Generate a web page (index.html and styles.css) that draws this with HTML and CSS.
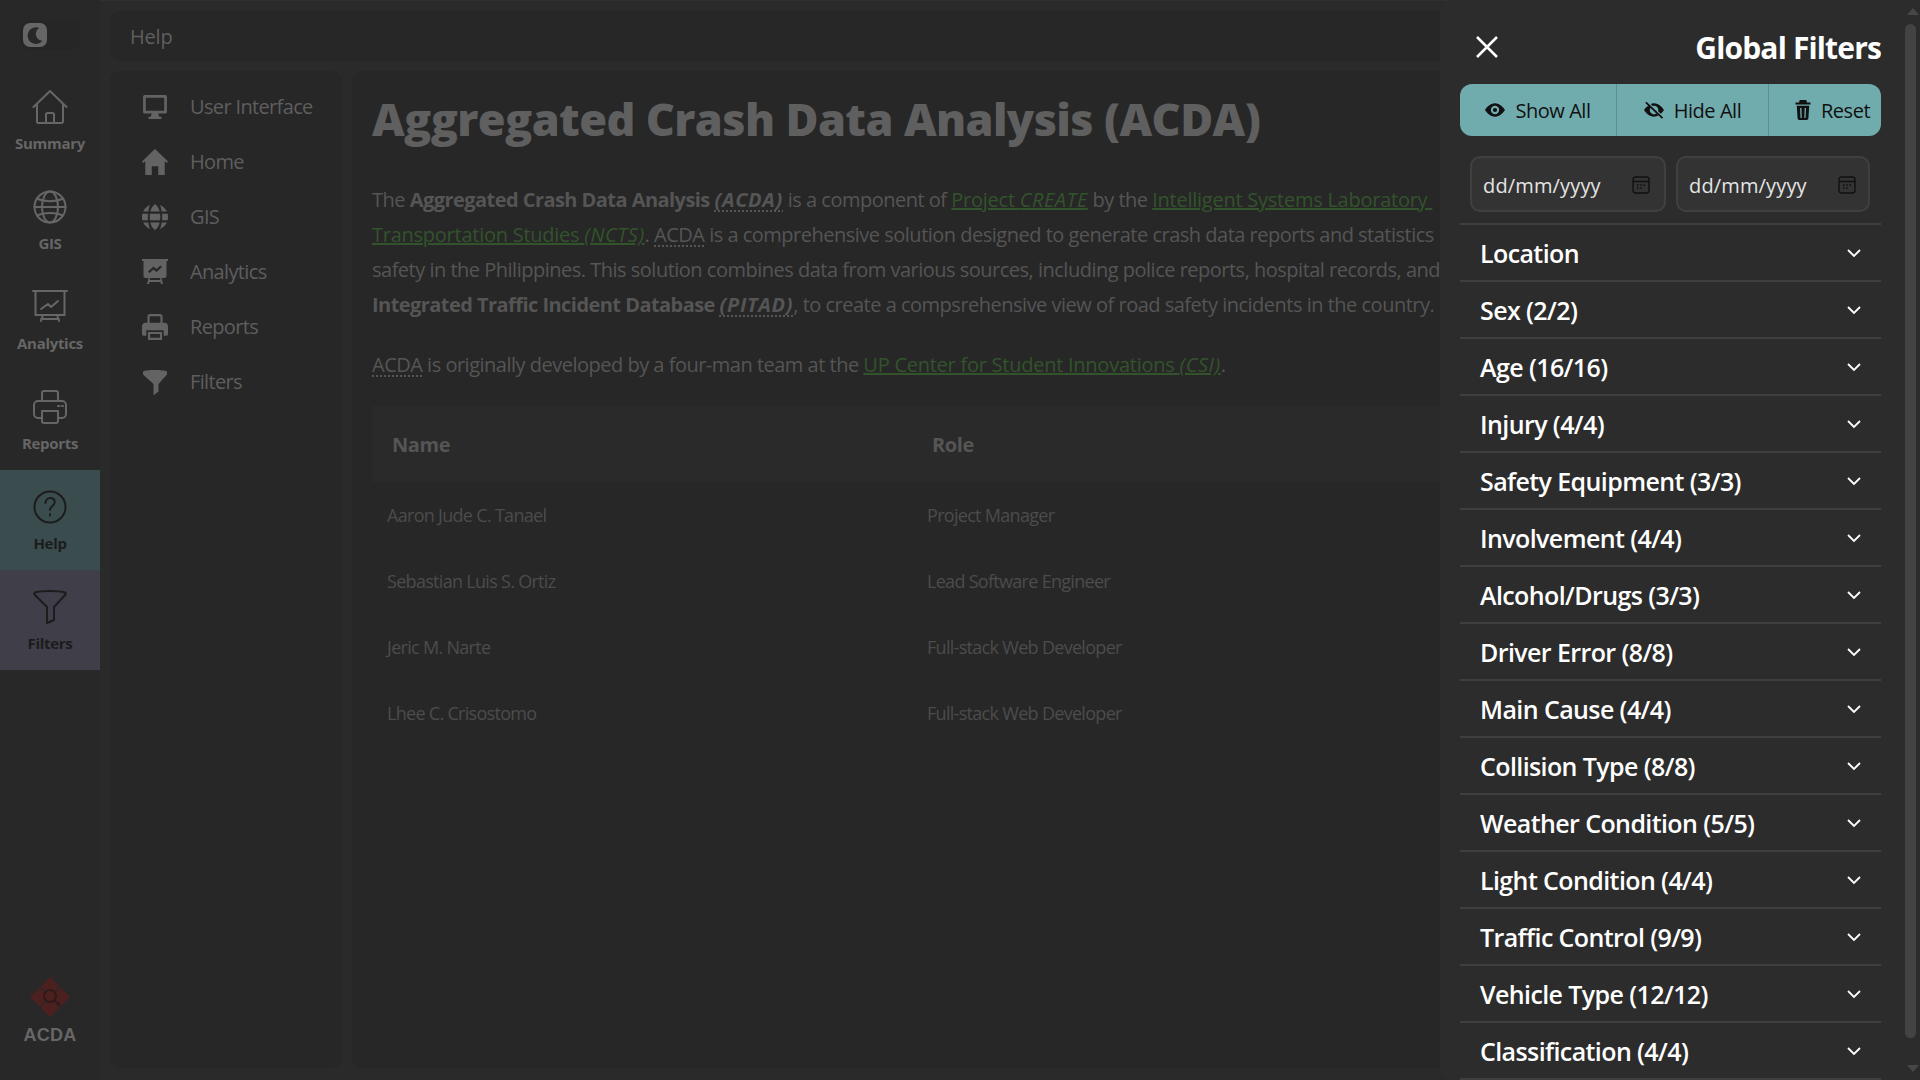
FILE: index.html
```html
<!DOCTYPE html>
<html lang="en">
<head>
<meta charset="utf-8">
<title>Help</title>
<link rel="stylesheet" href="styles.css">
</head>
<body>
<div class="app">
  <nav class="rail">
    <div class="toggle-wrap"><div class="toggle"><div class="knob">
      <svg viewBox="0 0 24 24" class="moon"><path d="M17 3.500a10 10 0 1 0 4 15.500 9 9 0 0 1-8-7.500 9 9 0 0 1 4-8z"/></svg>
    </div></div></div>
    <a class="rail-item"><svg viewBox="0 0 36 36" class="ri"><path d="M1.500 18 18 2l16.500 16M5 15v17.500a1.500 1.500 0 0 0 1.500 1.500h23a1.500 1.500 0 0 0 1.500-1.500V15M14 34v-8.500a1.500 1.500 0 0 1 1.500-1.500h5a1.500 1.500 0 0 1 1.500 1.500V34"/></svg><span>Summary</span></a>
    <a class="rail-item"><svg viewBox="0 0 36 36" class="ri"><circle cx="18" cy="18" r="15.500"/><ellipse cx="18" cy="18" rx="8" ry="15.500"/><path d="M5 9.500c7 3.500 19 3.500 26 0M5 26.500c7-3.500 19-3.500 26 0M2.500 18h31"/></svg><span>GIS</span></a>
    <a class="rail-item"><svg viewBox="0 0 36 36" class="ri"><path d="M1 2h34M3.500 2v24h29V2M9 32l2-6M27 32l-2-6M9 30h18M9 20l7-5 3 3 7-6"/></svg><span>Analytics</span></a>
    <a class="rail-item"><svg viewBox="0 0 36 36" class="ri"><path d="M10 12V4a2 2 0 0 1 2-2h12a2 2 0 0 1 2 2v8M10 29H6a4 4 0 0 1-4-4v-9a4 4 0 0 1 4-4h24a4 4 0 0 1 4 4v9a4 4 0 0 1-4 4h-4M10 22h16v10a2 2 0 0 1-2 2H12a2 2 0 0 1-2-2zM26 17h1.500M30 17h1"/></svg><span>Reports</span></a>
    <a class="rail-item help"><svg viewBox="0 0 36 36" class="ri"><circle cx="18" cy="18" r="15.500"/><path d="M13.500 14c0-3 2-5 4.700-5s4.500 1.800 4.500 4.200c0 3.800-4.700 3.800-4.700 7.800M18 25v1.500"/></svg><span>Help</span></a>
    <a class="rail-item filters"><svg viewBox="0 0 36 36" class="ri"><path d="M3 3.500C10 1.500 26 1.500 33 3.500c1 .3 1 1.500.300 2.300L22 18v13l-7 3V18L2.700 5.800C2 5 2 3.800 3 3.500z"/></svg><span>Filters</span></a>
    <div class="logo">
      <svg viewBox="0 0 40 40" class="logo-mark"><path d="M20 0l9.500 9.500L20 19l-9.500-9.500zM20 21l9.500 9.500L20 40l-9.500-9.500zM9.500 10.500 19 20l-9.500 9.500L0 20zM30.500 10.500 40 20l-9.500 9.500L21 20z" class="diamond"/><circle cx="20" cy="19" r="6" class="lens"/><path d="M24 23l6 5" class="lens"/></svg>
      <span class="logo-text">ACDA</span>
    </div>
  </nav>

  <div class="content">
    <header class="topbar">Help</header>
    <div class="columns">
      <aside class="subnav">
        <a class="sub-item"><svg viewBox="0 0 24 24" class="si"><path d="M2.500 1h19A1.500 1.500 0 0 1 23 2.500v14a1.500 1.500 0 0 1-1.500 1.500h-19A1.500 1.500 0 0 1 1 16.500v-14A1.500 1.500 0 0 1 2.500 1zM3.500 3.500v12h17v-12zM9 18h6l1 3h2v2H6v-2h2z" fill-rule="evenodd"/></svg><span>User Interface</span></a>
        <a class="sub-item"><svg viewBox="0 0 24 24" class="si"><path d="M12 0l12 11.500-1 1.500-2-1.800V24h-6v-8H9v8H3V11.200L1 13 0 11.500z"/></svg><span>Home</span></a>
        <a class="sub-item"><svg viewBox="0 0 24 24" class="si"><path d="M12 0c2 1.500 3.700 4 4.300 7H7.700C8.300 4 10 1.500 12 0zM7.300 9h9.400c.2 2 .2 4 0 6H7.300c-.2-2-.2-4 0-6zM7.700 17h8.600c-.6 3-2.300 5.500-4.300 7-2-1.500-3.700-4-4.300-7zM5.500 9c-.2 2-.2 4 0 6H.300c-.4-2-.4-4 0-6zM18.500 9h5.200c.4 2 .4 4 0 6h-5.200c.2-2 .2-4 0-6zM5.800 7H1c1-2.300 3.200-4.500 6.500-6C6.700 2.500 6.100 4.700 5.800 7zM18.200 7H23c-1-2.300-3.200-4.500-6.500-6 .8 1.500 1.400 3.700 1.700 6zM5.800 17H1c1 2.300 3.200 4.500 6.500 6-.8-1.500-1.400-3.700-1.700-6zM18.200 17H23c-1 2.300-3.200 4.500-6.500 6 .8-1.500 1.400-3.700 1.700-6z"/></svg><span>GIS</span></a>
        <a class="sub-item"><svg viewBox="0 0 26 26" class="si"><path d="M0 0h26v2h-1.500v15a2 2 0 0 1-2 2h-3l1.500 6h-2l-.5-2H7.500L7 25H5l1.500-6h-3a2 2 0 0 1-2-2V2H0zM8 19l-.5 2h11l-.5-2zM6 12.500l1.500 1.500 4-3.500 3 2.500 5.500-5-1.500-1.500-4 3.500-3-2.500z" fill-rule="evenodd"/></svg><span>Analytics</span></a>
        <a class="sub-item"><svg viewBox="0 0 24 24" class="si"><path d="M5 8V2.500A2.500 2.500 0 0 1 7.500 0h9A2.500 2.500 0 0 1 19 2.500V8h-2V2.500a.5.500 0 0 0-.500-.500h-9a.5.500 0 0 0-.500.500V8zM3.500 8h17A3.500 3.500 0 0 1 24 11.500v7a1.500 1.500 0 0 1-1.500 1.500H20v-5H4v5H1.500A1.500 1.500 0 0 1 0 18.500v-7A3.500 3.500 0 0 1 3.500 8zM5.500 16.500h13V24h-13zM7.500 18.500V22h9v-3.500z" fill-rule="evenodd"/></svg><span>Reports</span></a>
        <a class="sub-item"><svg viewBox="0 0 24 26" class="si"><path d="M0 2.500C3 .5 21 .5 24 2.500v3L15.500 15v7.500L11 26h-.5V15L0 5.500z"/></svg><span>Filters</span></a>
      </aside>
      <main class="main">
        <h1 class="title">Aggregated Crash Data Analysis (ACDA)</h1>
        <p class="para lead">The <b>Aggregated Crash Data Analysis <abbr><i>(ACDA)</i></abbr></b> is a component of <a class="lnk">Project <i>CREATE</i></a> by the <a class="lnk">Intelligent Systems Laboratory&nbsp;</a><br><a class="lnk">Transportation Studies <i>(NCTS)</i></a>. <abbr>ACDA</abbr> is a comprehensive solution designed to generate crash data reports and statistics<br>safety in the Philippines. This solution combines data from various sources, including police reports, hospital records, and<br><b>Integrated Traffic Incident Database <abbr><i>(PITAD)</i></abbr></b>, to create a compsrehensive view of road safety incidents in the country.</p>
        <p class="para"><abbr>ACDA</abbr> is originally developed by a four-man team at the <a class="lnk">UP Center for Student Innovations <i>(CSI)</i></a>.</p>
        <table class="team">
          <thead><tr><th>Name</th><th>Role</th></tr></thead>
          <tbody>
            <tr><td>Aaron Jude C. Tanael</td><td>Project Manager</td></tr>
            <tr><td>Sebastian Luis S. Ortiz</td><td>Lead Software Engineer</td></tr>
            <tr><td>Jeric M. Narte</td><td>Full-stack Web Developer</td></tr>
            <tr><td>Lhee C. Crisostomo</td><td>Full-stack Web Developer</td></tr>
          </tbody>
        </table>
      </main>
    </div>
  </div>

  <section class="drawer">
    <div class="drawer-head">
      <svg viewBox="0 0 22 22" class="close"><path d="M1 1l20 20M21 1L1 21"/></svg>
      <h2>Global Filters</h2>
    </div>
    <div class="btn-group">
      <button class="btn show"><svg viewBox="0 0 24 24" class="bi"><path fill-rule="evenodd" d="M12 4C6 4 2 9 0 12c2 3 6 8 12 8s10-5 12-8c-2-3-6-8-12-8zm0 3a5 5 0 1 1 0 10 5 5 0 0 1 0-10zm0 2.500a2.500 2.500 0 1 0 0 5 2.500 2.500 0 0 0 0-5z"/></svg>Show All</button>
      <button class="btn hide"><svg viewBox="0 0 24 24" class="bi"><path d="M3 2l20 19-1.500 1.500-20-19z"/><path fill-rule="evenodd" d="M6 6.500C2.500 8 1 10.500 0 12c2 3 6 8 12 8 2 0 3.800-.5 5.300-1.400L14.800 16.300A5 5 0 0 1 7.800 9.500zM12 4c-1.500 0-2.800.3-4 .8l2.500 2.400A5 5 0 0 1 17 13.500l3.200 3C22 15 23.200 13.300 24 12c-2-3-6-8-12-8z"/></svg>Hide All</button>
      <button class="btn reset"><svg viewBox="0 0 24 24" class="bi"><path d="M9 0h6a1.500 1.500 0 0 1 1.500 1.500V3H21v2.500H3V3h4.500V1.500A1.500 1.500 0 0 1 9 0z"/><path fill-rule="evenodd" d="M4.500 7h15L18.500 22a2 2 0 0 1-2 2h-9a2 2 0 0 1-2-2zM8.500 9.500l.5 12h1.500l-.3-12zM14 9.500l-.4 12h1.500l.5-12z"/></svg>Reset</button>
    </div>
    <div class="dates">
      <div class="date"><span>dd/mm/yyyy</span><svg viewBox="0 0 18 18" class="cal"><rect x="1" y="1" width="16" height="16" rx="2.500"/><path d="M1 5.500h16M5 9h1.500M8.300 9h1.500M11.600 9h1.500M5 12h1.500M8.300 12h1.500"/></svg></div>
      <div class="date"><span>dd/mm/yyyy</span><svg viewBox="0 0 18 18" class="cal"><rect x="1" y="1" width="16" height="16" rx="2.500"/><path d="M1 5.500h16M5 9h1.500M8.300 9h1.500M11.600 9h1.500M5 12h1.500M8.300 12h1.500"/></svg></div>
    </div>
    <ul class="acc">
      <li>Location<svg viewBox="0 0 14 10" class="chev"><path d="M1 2l6 6 6-6"/></svg></li>
      <li>Sex (2/2)<svg viewBox="0 0 14 10" class="chev"><path d="M1 2l6 6 6-6"/></svg></li>
      <li>Age (16/16)<svg viewBox="0 0 14 10" class="chev"><path d="M1 2l6 6 6-6"/></svg></li>
      <li>Injury (4/4)<svg viewBox="0 0 14 10" class="chev"><path d="M1 2l6 6 6-6"/></svg></li>
      <li>Safety Equipment (3/3)<svg viewBox="0 0 14 10" class="chev"><path d="M1 2l6 6 6-6"/></svg></li>
      <li>Involvement (4/4)<svg viewBox="0 0 14 10" class="chev"><path d="M1 2l6 6 6-6"/></svg></li>
      <li>Alcohol/Drugs (3/3)<svg viewBox="0 0 14 10" class="chev"><path d="M1 2l6 6 6-6"/></svg></li>
      <li>Driver Error (8/8)<svg viewBox="0 0 14 10" class="chev"><path d="M1 2l6 6 6-6"/></svg></li>
      <li>Main Cause (4/4)<svg viewBox="0 0 14 10" class="chev"><path d="M1 2l6 6 6-6"/></svg></li>
      <li>Collision Type (8/8)<svg viewBox="0 0 14 10" class="chev"><path d="M1 2l6 6 6-6"/></svg></li>
      <li>Weather Condition (5/5)<svg viewBox="0 0 14 10" class="chev"><path d="M1 2l6 6 6-6"/></svg></li>
      <li>Light Condition (4/4)<svg viewBox="0 0 14 10" class="chev"><path d="M1 2l6 6 6-6"/></svg></li>
      <li>Traffic Control (9/9)<svg viewBox="0 0 14 10" class="chev"><path d="M1 2l6 6 6-6"/></svg></li>
      <li>Vehicle Type (12/12)<svg viewBox="0 0 14 10" class="chev"><path d="M1 2l6 6 6-6"/></svg></li>
      <li>Classification (4/4)<svg viewBox="0 0 14 10" class="chev"><path d="M1 2l6 6 6-6"/></svg></li>
    </ul>
    <div class="scrollbar">
      <div class="arrow up"></div>
      <div class="thumb"></div>
      <div class="arrow down"></div>
    </div>
  </section>
</div>
</body>
</html>
```

FILE: styles.css
```css
* { box-sizing: border-box; }
html, body { margin: 0; height: 100%; overflow: hidden; }
body { font-family: "Open Sans", "Noto Sans", sans-serif; background: #2a2a2a; color: #5a5a5a; }
.app { position: relative; display: flex; height: 1080px; overflow: hidden; }

/* left rail */
.rail { width: 100px; flex: none; display: flex; flex-direction: column; background: #282828; }
.toggle-wrap { height: 70px; padding: 20px 20px 0; }
.toggle { width: 60px; height: 30px; border-radius: 10px; background: #262626; padding: 3px; }
.knob { width: 24px; height: 24px; border-radius: 7px; background: #666; padding: 2px; }
.moon { display: block; width: 20px; height: 20px; fill: #282828; }
.rail-item { height: 100px; display: flex; flex-direction: column; align-items: center; padding-top: 19px; color: #666; }
.rail-item span { font-size: 15px; font-weight: 700; line-height: 20px; margin-top: 8px; letter-spacing: -0.3px; }
.ri { width: 36px; height: 36px; fill: none; stroke: #666; stroke-width: 2; stroke-linejoin: round; stroke-linecap: round; }
.help { background: #3a4c4e; color: #1c1c1c; }
.filters { background: #3f3e49; color: #1c1c1c; }
.help .ri, .filters .ri { stroke: #1c1c1c; }
.logo { margin-top: auto; height: 103px; padding-bottom: 33px; display: flex; flex-direction: column; align-items: center; }
.logo-mark { width: 40px; height: 40px; flex: none; }
.diamond { fill: #4d2020; }
.lens { fill: #4d2020; stroke: #311919; stroke-width: 2; }
.logo-text { font-family: "Liberation Sans", sans-serif; font-weight: 700; font-size: 18px; line-height: 22px; margin-top: 7px; color: #666; letter-spacing: 0.2px; }

/* content */
.content { flex: 1; min-width: 0; display: flex; flex-direction: column; gap: 10px; padding: 10px 10px 12px; border-top: 1px solid #303030; }
.topbar { height: 50px; flex: none; background: #272727; border-radius: 10px; padding: 0 20px; display: flex; align-items: center; font-size: 20px; color: #5f5f5f; letter-spacing: -0.2px; }
.columns { flex: 1; display: flex; gap: 10px; min-height: 0; }
.subnav { width: 232px; flex: none; background: #272727; border-radius: 10px; padding: 8px 0 0 32px; }
.sub-item { height: 55px; display: flex; align-items: center; gap: 22px; font-size: 20px; color: #5e5e5e; letter-spacing: -0.65px; }
.si { width: 26px; height: 26px; flex: none; fill: #636363; }
.main { flex: 1; min-width: 0; background: #272727; border-radius: 10px; padding: 18px 20px; overflow: hidden; }
.title { margin: 0; font-size: 45px; line-height: 60px; font-weight: 800; color: #5f5f5f; white-space: nowrap; letter-spacing: -0.62px; }
.para { margin: 0; font-size: 20px; line-height: 35px; color: #555; white-space: nowrap; letter-spacing: -0.5px; }
.lead { margin: 33px 0 25px; }
.para b { font-weight: 700; letter-spacing: -0.55px; }
.para i { letter-spacing: 0.3px; }
.para b i { letter-spacing: 0.7px; }
.lnk { color: #33532c; text-decoration: underline; letter-spacing: -0.25px; }
.lnk i { letter-spacing: 0.5px; }
abbr { text-decoration: underline dotted; text-underline-offset: 3px; }
.team { margin-top: 24px; border-collapse: collapse; width: 1520px; table-layout: fixed; }
.team th { background: #2a2a2a; height: 76px; padding: 0 20px; text-align: left; font-size: 20px; font-weight: 700; color: #555; letter-spacing: -0.4px; }
.team th:first-child { width: 540px; }
.team td { height: 66px; padding: 0 15px; font-size: 18px; color: #4c4c4c; letter-spacing: -0.7px; }

/* drawer */
.drawer { position: absolute; top: 0; right: 0; bottom: 0; width: 480px; background: #2c2c2c; border-radius: 10px 0 0 10px; color: #fff; overflow: hidden; }
.drawer-head { height: 84px; padding: 36px 39px 0 36px; display: flex; justify-content: space-between; align-items: flex-start; }
.close { width: 22px; height: 22px; fill: none; stroke: #fff; stroke-width: 2.500; }
.drawer-head h2 { margin: -8px 0 0; font-size: 30px; line-height: 40px; font-weight: 700; letter-spacing: -0.85px; }
.btn-group { margin: 0 39px 0 20px; height: 52px; display: flex; border-radius: 12px; overflow: hidden; background: #70abad; }
.btn { border: 0; background: none; padding: 0; color: #111; font: inherit; font-size: 20px; display: flex; align-items: center; justify-content: center; gap: 10px; letter-spacing: -0.45px; }
.btn + .btn { border-left: 1px solid #5c8f91; }
.show { width: 156px; }
.hide { width: 152px; }
.reset { flex: 1; padding-left: 13px; gap: 8px; }
.bi { width: 20px; height: 20px; fill: #111; }
.dates { display: flex; gap: 10px; padding: 20px 50px 11px 30px; }
.date { flex: none; width: 196px; height: 56px; border: 2px solid #404040; border-radius: 10px; background: #333; padding: 1px 14px 0 11px; display: flex; align-items: center; justify-content: space-between; font-size: 20px; color: #e4e4e4; letter-spacing: 0.15px; }
.date + .date { width: 194px; padding-right: 12px; }
.date span { padding-top: 1px; }
.cal { width: 18px; height: 18px; fill: none; stroke: #111; stroke-width: 1.400; }
.acc { margin: 0 39px 0 20px; padding: 0; list-style: none; border-top: 2px solid #3f3f3f; }
.acc li { height: 57px; padding: 0 20px; display: flex; align-items: center; justify-content: space-between; font-size: 25px; font-weight: 600; border-bottom: 2px solid #3f3f3f; letter-spacing: -0.6px; }
.chev { width: 14px; height: 10px; fill: none; stroke: #fff; stroke-width: 1.800; margin-top: 0; }

.scrollbar { position: absolute; top: 0; right: 0; bottom: 0; width: 15px; display: flex; flex-direction: column; align-items: center; padding: 8px 0; }
.thumb { width: 11px; height: 1014px; margin: 9px 4px 27px 0; border-radius: 6px; background: #434343; }
.arrow { width: 0; height: 0; border-left: 6px solid transparent; border-right: 6px solid transparent; }
.up { border-bottom: 7px solid #474747; }
.down { border-top: 7px solid #474747; }
```
